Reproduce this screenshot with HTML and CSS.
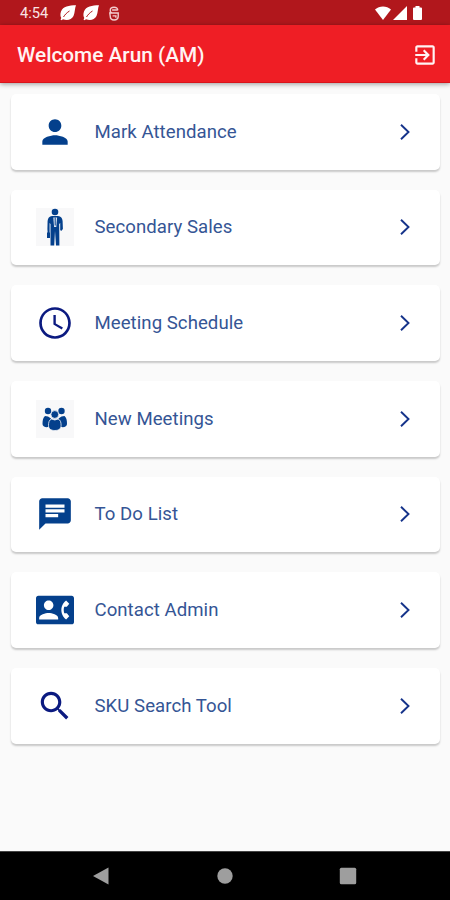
FILE: index.html
```
<!DOCTYPE html>
<html lang="en">
<head>
    <meta charset="UTF-8">
    <meta name="viewport" content="width=device-width, initial-scale=1.0">
    <title>Welcome</title>
    <link rel="stylesheet" href="styles.css">
</head>
<body>
    <div class="status-bar">
        <span class="time">4:54</span>
        <svg class="leaf" viewBox="0 0 16 16"><path d="M16 .3C9 .3 3 1.500 1 6.500c-1 3-.6 5 .3 6.500l-.8 1.500 1 .8L3 14.300c4 1.700 8.500.7 10.500-3.300C15 7.500 14.800 3 16 .3z"/><path class="vein" d="M3.500 12C5 9.500 7 7.500 9.500 6"/></svg>
        <svg class="leaf" viewBox="0 0 16 16"><path d="M16 .3C9 .3 3 1.500 1 6.500c-1 3-.6 5 .3 6.500l-.8 1.500 1 .8L3 14.300c4 1.700 8.500.7 10.500-3.300C15 7.500 14.800 3 16 .3z"/><path class="vein" d="M3.500 12C5 9.500 7 7.500 9.500 6"/></svg>
        <svg class="app-icon" viewBox="0 0 12 16"><path d="M10 4.500C10 2.500 8.500 1.300 6 1.300S2 2.500 2 4.500 3 7.500 4 7.500M4 4.300h6M1.500 7.500h9V11c0 2.500-2 4-4.500 4s-4-1.500-4-4zM4.500 10.500h3.500v2"/></svg>
        <div class="signals">
            <svg class="wifi" viewBox="0 0 16 14"><path d="M0 3.500C4.500-.5 11.500-.5 16 3.500L8 14z"/></svg>
            <svg class="cell" viewBox="0 0 14 14"><path d="M14 0v14H0z"/></svg>
            <svg class="battery" viewBox="0 0 9 14"><path d="M2.500 0h4v1.500H8a1 1 0 0 1 1 1V13a1 1 0 0 1-1 1H1a1 1 0 0 1-1-1V2.500a1 1 0 0 1 1-1h1.500z"/></svg>
        </div>
    </div>

    <div class="header">
        <h1>Welcome Arun (AM)</h1>
        <svg class="logout" viewBox="0 0 24 24"><path d="M10.090 15.590 11.500 17l5-5-5-5-1.410 1.410L12.670 11H3v2h9.670l-2.580 2.590zM19 3H5c-1.110 0-2 .9-2 2v4h2V5h14v14H5v-4H3v4c0 1.100.89 2 2 2h14c1.100 0 2-.9 2-2V5c0-1.100-.9-2-2-2z"/></svg>
    </div>

    <div class="menu">
        <a class="card" href="#">
            <svg class="icon" viewBox="0 0 24 24"><path d="M12 12c2.210 0 4-1.790 4-4s-1.790-4-4-4-4 1.790-4 4 1.790 4 4 4zm0 2c-2.670 0-8 1.340-8 4v2h16v-2c0-2.660-5.330-4-8-4z"/></svg>
            <span class="label">Mark Attendance</span>
            <svg class="arrow" viewBox="0 0 10 16"><path d="M1 .8 8.500 8 1 15.200"/></svg>
        </a>
        <a class="card" href="#">
            <svg class="icon tile" viewBox="0 0 38 38">
                <circle cx="19" cy="4" r="3.300"/>
                <path d="M16 8h6c3 .3 4.300 2 4.600 5l.3 8-1.700 2-1-1V15l-1 1 .2 21.500h-3.400L19 23l-.8 14.500h-3.700V16l-.9-1v9l.4 1v5H11v-5l.6-1-.2-3 .2-8c.3-3 1.600-4.700 4.400-5z"/>
                <path class="shirt" d="M17.300 9.500h3.800l-.8 9.500h-2.200z"/>
                <path class="tie" d="M19.200 9.500v8"/>
            </svg>
            <span class="label">Secondary Sales</span>
            <svg class="arrow" viewBox="0 0 10 16"><path d="M1 .8 8.500 8 1 15.200"/></svg>
        </a>
        <a class="card" href="#">
            <svg class="icon dark" viewBox="0 0 24 24"><path d="M11.990 2C6.470 2 2 6.480 2 12s4.470 10 9.990 10C17.520 22 22 17.520 22 12S17.520 2 11.990 2zM12 20.300c-4.600 0-8.300-3.700-8.300-8.300S7.400 3.700 12 3.700s8.300 3.700 8.300 8.300-3.700 8.300-8.300 8.300zM12.500 7H11v6l5.250 3.150.75-1.230-4.500-2.670z"/></svg>
            <span class="label">Meeting Schedule</span>
            <svg class="arrow" viewBox="0 0 10 16"><path d="M1 .8 8.500 8 1 15.200"/></svg>
        </a>
        <a class="card" href="#">
            <svg class="icon tile" viewBox="0 0 38 38">
                <circle cx="12" cy="11" r="3.200"/>
                <circle cx="25.500" cy="11" r="3.200"/>
                <path d="M9 16l3 .5 3 2-2.500 8.500c-3.500.5-6-.5-6-3 0-3.500.5-6.500 2.500-8z"/>
                <path d="M28.500 16l-3 .5-3 2 2.500 8.500c3.500.5 6-.5 6-3 0-3.500-.5-6.500-2.500-8z"/>
                <g class="front">
                    <circle cx="18.800" cy="14.500" r="3.900"/>
                    <path d="M15.500 19l3.300 1 3.300-1c2.500 1 3 3.500 3 6.500 0 3.500-2.500 5-6.300 5s-6.300-1.500-6.300-5c0-3 .5-5.500 3-6.500z"/>
                </g>
            </svg>
            <span class="label">New Meetings</span>
            <svg class="arrow" viewBox="0 0 10 16"><path d="M1 .8 8.500 8 1 15.200"/></svg>
        </a>
        <a class="card" href="#">
            <svg class="icon" viewBox="0 0 24 24"><path d="M20 2H4c-1.100 0-1.990.9-1.990 2L2 22l4-4h14c1.100 0 2-.9 2-2V4c0-1.100-.9-2-2-2zM6 9h12v2H6V9zm8 5H6v-2h8v2zm4-6H6V6h12v2z"/></svg>
            <span class="label">To Do List</span>
            <svg class="arrow" viewBox="0 0 10 16"><path d="M1 .8 8.500 8 1 15.200"/></svg>
        </a>
        <a class="card" href="#">
            <svg class="icon" viewBox="0 0 24 24"><path d="M22.500 3h-21C.6 3 0 3.600 0 4.500v15c0 .9.6 1.500 1.500 1.500h21c.9 0 1.500-.6 1.500-1.500v-15c0-.9-.6-1.500-1.500-1.500zM8 6c1.660 0 3 1.340 3 3s-1.340 3-3 3-3-1.340-3-3 1.340-3 3-3zm6 12H2v-1c0-2 4-3.100 6-3.100s6 1.100 6 3.100v1zm3.850-4h1.640L21 16l-1.990 1.990c-1.310-.98-2.280-2.380-2.730-3.990-.18-.64-.28-1.310-.28-2s.1-1.360.28-2c.45-1.620 1.420-3.010 2.730-3.990L21 8l-1.510 2h-1.640c-.22.630-.35 1.300-.35 2s.13 1.370.35 2z"/></svg>
            <span class="label">Contact Admin</span>
            <svg class="arrow" viewBox="0 0 10 16"><path d="M1 .8 8.500 8 1 15.200"/></svg>
        </a>
        <a class="card" href="#">
            <svg class="icon dark" viewBox="0 0 24 24"><path d="M15.500 14h-.79l-.28-.27C15.410 12.590 16 11.110 16 9.500 16 5.910 13.090 3 9.500 3S3 5.910 3 9.500 5.910 16 9.500 16c1.610 0 3.090-.59 4.230-1.570l.27.280v.79l5 4.990L20.490 19l-4.990-5zm-6 0C7.010 14 5 11.990 5 9.500S7.010 5 9.500 5 14 7.010 14 9.500 11.990 14 9.500 14z"/></svg>
            <span class="label">SKU Search Tool</span>
            <svg class="arrow" viewBox="0 0 10 16"><path d="M1 .8 8.500 8 1 15.200"/></svg>
        </a>
    </div>

    <div class="nav-bar">
        <svg viewBox="0 0 18 18"><path d="M16.500 .6v16.800L1 9z"/></svg>
        <svg viewBox="0 0 18 18"><circle cx="9" cy="9" r="7.700"/></svg>
        <svg viewBox="0 0 18 18"><rect x=".8" y=".8" width="16.400" height="16.400" rx="1.500"/></svg>
    </div>
</body>
</html>
```
FILE: styles.css
```
* {
    box-sizing: border-box;
}

body {
    font-family: Roboto, Arial, sans-serif;
    display: flex;
    flex-direction: column;
    height: 900px;
    margin: 0;
    background-color: #fafafa;
    overflow: hidden;
}

svg {
    flex: none;
    display: block;
}

.status-bar {
    display: flex;
    align-items: center;
    height: 25px;
    padding: 1px 28px 0 20px;
    background-color: #b1171c;
    color: #f9e3e4;
    fill: white;
}

.time {
    width: 39.5px;
    font-size: 14.7px;
    line-height: 20px;
}

.leaf {
    width: 16px;
    height: 16px;
    margin-right: 7px;
}

.vein {
    fill: none;
    stroke: #b1171c;
    stroke-width: 1;
}

.app-icon {
    width: 12px;
    height: 15px;
    margin-left: 2px;
    fill: none;
    stroke: #f3cccd;
    stroke-width: 1.5;
}

.signals {
    display: flex;
    margin-left: auto;
}

.wifi {
    width: 16px;
    height: 14px;
}

.cell {
    width: 14px;
    height: 14px;
    margin: 0 6px 0 2px;
}

.battery {
    width: 9px;
    height: 14px;
}

.header {
    display: flex;
    align-items: center;
    justify-content: space-between;
    height: 58px;
    padding: 2px 12px 0 17px;
    background-color: #ef1e25;
    border-bottom: 1px solid #d9141b;
    box-shadow: 0 1px 5px rgba(0, 0, 0, 0.4);
    position: relative;
    z-index: 1;
}

h1 {
    margin: 0;
    color: #fff3f3;
    font-size: 20.8px;
    font-weight: 500;
}

.logout {
    width: 26px;
    height: 26px;
    fill: #fff3f3;
}

.menu {
    display: flex;
    flex-direction: column;
    gap: 20px;
    flex: 1;
    padding: 11px 10px 0 11px;
}

.card {
    display: flex;
    align-items: center;
    height: 75.67px;
    padding: 0 30px 0 24.5px;
    background: white;
    border-radius: 5px;
    box-shadow: 0 2px 2px rgba(0, 0, 0, 0.2);
    color: #355595;
    text-decoration: none;
}

.icon {
    width: 38px;
    height: 38px;
    fill: #04408c;
}

.icon.dark {
    fill: #0b1a80;
}

.tile {
    background-color: #f8f8f9;
}

.shirt {
    fill: #dfe5f1;
}

.tie {
    stroke: #04408c;
    stroke-width: 1;
}

.front {
    stroke: #f8f8f9;
    stroke-width: 0.8;
}

.label {
    flex: 1;
    margin-left: 21px;
    font-size: 18.6px;
    letter-spacing: 0.05px;
}

.arrow {
    width: 10px;
    height: 16px;
    fill: none;
    stroke: #15338a;
    stroke-width: 1.9;
}

.nav-bar {
    display: flex;
    align-items: center;
    justify-content: space-between;
    height: 49px;
    padding: 0 93px 1px 92px;
    background-color: black;
    border-top: 1px solid #444;
    fill: #9e9e9e;
}

.nav-bar svg {
    width: 18px;
    height: 18px;
}
```
